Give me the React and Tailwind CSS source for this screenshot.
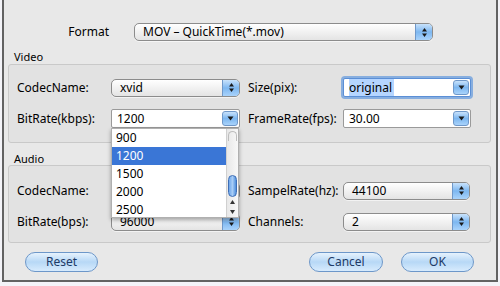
import React from "react";

const FONT = { fontFamily: "'Noto Sans', 'DejaVu Sans', sans-serif" };

function UpDown() {
  return (
    <svg width="7" height="11" viewBox="0 0 7 11">
      <path d="M3.5 1 L6 4.5 L1 4.5 Z" fill="#1a1a1a" />
      <path d="M3.5 10 L6 6.5 L1 6.5 Z" fill="#1a1a1a" />
    </svg>
  );
}

function Down() {
  return (
    <svg width="7" height="5" viewBox="0 0 7 5">
      <path d="M0.5 0.5 L6.5 0.5 L3.5 4.5 Z" fill="#1a1a1a" />
    </svg>
  );
}

function Popup({ value, width = "w-[129px]" }) {
  return (
    <div
      className={`${width} h-[18px] flex items-stretch rounded-[5px] border border-[#8c8c8c] overflow-hidden bg-gradient-to-b from-[#ffffff] to-[#e4e4e4] shadow-[0_1px_0_rgba(255,255,255,0.6)]`}
    >
      <div className="flex-1 pl-[8px] text-[12px] leading-[16px] text-black truncate">{value}</div>
      <div className="w-[17px] flex items-center justify-center border-l border-[#6f98c9] bg-gradient-to-b from-[#c8e2fb] via-[#7db7f0] to-[#a9d3fb]">
        <UpDown />
      </div>
    </div>
  );
}

function Combo({ value, focused, width = "w-[129px]" }) {
  return (
    <div
      className={`${width} h-[19px] flex items-stretch rounded-[2px] border ${
        focused ? "border-[#5b8fd6] shadow-[0_0_0_2px_rgba(104,156,222,0.75)]" : "border-[#9a9a9a]"
      } bg-white`}
    >
      <div className="flex-1 pl-[5px] text-[12px] leading-[17px] text-black">
        {focused ? <span className="bg-[#b5d5ff] pr-[2px]">{value}</span> : value}
      </div>
      <div className="w-[16px] my-[1px] mr-[1px] rounded-[3px] flex items-center justify-center border border-[#6f98c9] bg-gradient-to-b from-[#c8e2fb] via-[#7db7f0] to-[#a9d3fb]">
        <Down />
      </div>
    </div>
  );
}

function Row({ label1, ctl1, label2, ctl2 }) {
  return (
    <div className="flex items-center h-[19px]">
      <div className="w-[94px] text-[12px] text-black">{label1}</div>
      {ctl1}
      <div className="w-[8px]" />
      <div className="w-[95px] text-[12px] text-black whitespace-nowrap">{label2}</div>
      {ctl2}
    </div>
  );
}

function Button({ children, width }) {
  return (
    <div
      className={`${width} h-[20px] rounded-full border border-[#6d97c9] bg-gradient-to-b from-[#e6f2fd] via-[#b7d8f6] to-[#d7ebfd] flex items-center justify-center text-[12px] text-[#1d3a66]`}
    >
      {children}
    </div>
  );
}

export default function App() {
  return (
    <div className="w-[500px] h-[286px] bg-[#f3f3f8]" style={FONT}>
      <div className="relative ml-[2px] w-[496px] h-[282px] bg-[#e8e8e8] border-l-2 border-r-2 border-b-2 border-[#626262]">
        {/* Format */}
        <div className="flex items-center pt-[23px] h-[41px]">
          <div className="w-[105px] text-right text-[12px] text-black">Format</div>
          <div className="w-[25px]" />
          <Popup value="MOV – QuickTime(*.mov)" width="w-[299px]" />
        </div>

        {/* Video */}
        <div className="ml-[10px] mt-[9px] text-[11px] leading-[13px] text-black">Video</div>
        <div className="ml-[4px] w-[483px] h-[79px] mt-[1px] rounded-[3px] border border-[#c9c9c9] bg-[#e2e2e2] pl-[8px] pt-[13px] flex flex-col gap-[12px]">
          <Row
            label1="CodecName:"
            ctl1={<Popup value="xvid" />}
            label2="Size(pix):"
            ctl2={<Combo value="original" focused width="w-[128px]" />}
          />
          <Row
            label1="BitRate(kbps):"
            ctl1={<Combo value="1200" />}
            label2="FrameRate(fps):"
            ctl2={<Combo value="30.00" width="w-[128px]" />}
          />
        </div>

        {/* Audio */}
        <div className="ml-[10px] mt-[9px] text-[11px] leading-[13px] text-black">Audio</div>
        <div className="ml-[4px] w-[483px] h-[78px] rounded-[3px] border border-[#c9c9c9] bg-[#e2e2e2] pl-[8px] pt-[15px] flex flex-col gap-[12px]">
          <Row
            label1="CodecName:"
            ctl1={<Popup value="" />}
            label2="SampelRate(hz):"
            ctl2={<Popup value="44100" width="w-[127px]" />}
          />
          <Row
            label1="BitRate(bps):"
            ctl1={<Popup value="96000" />}
            label2="Channels:"
            ctl2={<Popup value="2" width="w-[127px]" />}
          />
        </div>

        {/* Buttons */}
        <div className="flex items-center mt-[9px] pl-[21px]">
          <Button width="w-[73px]">Reset</Button>
          <div className="flex-1" />
          <Button width="w-[74px]">Cancel</Button>
          <div className="w-[18px]" />
          <Button width="w-[73px]">OK</Button>
          <div className="w-[22px]" />
        </div>

        {/* Dropdown list */}
        <div className="absolute left-[107px] top-[128px] w-[128px] h-[90px] bg-white border border-[#b0b0b0] shadow-[0_2px_4px_rgba(0,0,0,0.35)] flex">
          <div className="flex-1 text-[12px]">
            {["900", "1200", "1500", "2000", "2500"].map((v) => (
              <div
                key={v}
                className={`h-[18px] leading-[18px] pl-[4px] ${v === "1200" ? "bg-[#3a76d6] text-white" : "text-black"}`}
              >
                {v}
              </div>
            ))}
          </div>
          <div className="w-[12px] border-l border-[#d0d0d0] bg-gradient-to-r from-[#e8e8e8] to-[#f8f8f8] flex flex-col items-center">
            <div className="mt-[2px] w-[9px] h-[10px] rounded-t-full border border-b-0 border-[#bdbdbd]" />
            <div className="mt-[34px] w-[9px] h-[22px] rounded-full border border-[#3e6eb6] bg-gradient-to-r from-[#6ea6ea] via-[#a8cdf6] to-[#4f8fdc]" />
            <div className="flex-1" />
            <svg width="7" height="16" viewBox="0 0 7 16" className="mb-[2px]">
              <path d="M3.5 1 L6 5 L1 5 Z" fill="#333" />
              <path d="M3.5 15 L6 11 L1 11 Z" fill="#333" />
            </svg>
          </div>
        </div>
      </div>
    </div>
  );
}
